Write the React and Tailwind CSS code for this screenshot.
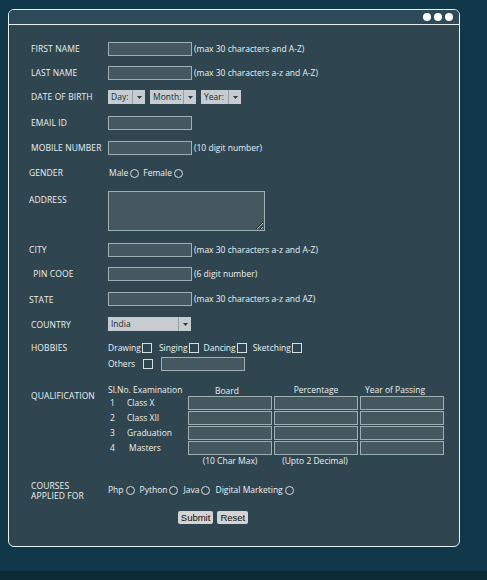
import React from "react";

const inputCls = "h-[14px] w-[84px] bg-[#43595f] border border-[#9eb0b4] outline-none";

function Label({ children, className = "" }) {
  return <div className={`w-[77px] shrink-0 text-[8.5px] uppercase tracking-[0.1px] ${className}`}>{children}</div>;
}

function TextRow({ label, hint, mt, labelCls = "" }) {
  return (
    <div className={`flex items-center h-[14px] ${mt}`}>
      <Label className={labelCls}>{label}</Label>
      <input className={inputCls} />
      {hint && <span className="ml-[2px] text-[8.5px]">{hint}</span>}
    </div>
  );
}

function Select({ text, w }) {
  return (
    <div className={`flex h-[14px] bg-[#c6cccf] text-[#1c2a30] text-[8.5px] ${w}`}>
      <span className="flex-1 pl-[3px] flex items-center">{text}</span>
      <span className="w-[13px] border-l border-[#93a0a5] flex items-center justify-center">
        <svg width="5" height="3" viewBox="0 0 5 3"><path d="M0 0h5L2.5 3z" fill="#2b3a40" /></svg>
      </span>
    </div>
  );
}

function Radio() {
  return <span className="inline-block w-[9px] h-[9px] rounded-full border border-[#d5dde0] ml-[2px]" />;
}

function Check() {
  return <span className="inline-block w-[10px] h-[10px] border border-[#d5dde0] ml-[1px]" />;
}

export default function App() {
  const quals = [
    ["1", "Class X", "ml-[12px]"],
    ["2", "Class XII", "ml-[12px]"],
    ["3", "Graduation", "ml-[12px]"],
    ["4", "Masters", "ml-[14px]"],
  ];
  return (
    <div className="w-[487px] h-[580px] bg-[#11384a] flex flex-col text-[#eaf0f2]" style={{ fontFamily: '"Open Sans", "Liberation Sans", sans-serif' }}>
      <div className="ml-[8px] mt-[9px] w-[452px] h-[538px] border-[1.5px] border-[#e9f0f2] rounded-[6px] bg-[#2f4650] overflow-hidden flex flex-col">
        <div className="h-[15px] shrink-0 bg-[#2c4a57] border-b-[1.5px] border-[#e9f0f2] flex items-center justify-end gap-[3px] pr-[6px]">
          <span className="w-[8px] h-[8px] rounded-full bg-white" />
          <span className="w-[8px] h-[8px] rounded-full bg-white" />
          <span className="w-[8px] h-[8px] rounded-full bg-white" />
        </div>
        <div className="pl-[22px] flex flex-col">
          <TextRow label="First Name" hint="(max 30 characters and A-Z)" mt="mt-[17px]" />
          <TextRow label="Last Name" hint="(max 30 characters a-z and A-Z)" mt="mt-[10px]" />
          <div className="flex items-center h-[14px] mt-[10px]">
            <Label>Date of Birth</Label>
            <div className="flex gap-[5px]">
              <Select text="Day:" w="w-[37px]" />
              <Select text="Month:" w="w-[46px]" />
              <Select text="Year:" w="w-[40px]" />
            </div>
          </div>
          <TextRow label="Email ID" mt="mt-[12px]" />
          <TextRow label="Mobile Number" hint="(10 digit number)" mt="mt-[11px]" />
          <div className="flex items-center h-[14px] mt-[11px]">
            <Label className="-ml-[2px] mr-[2px]">Gender</Label>
            <span className="text-[8.5px] ml-[1px]">Male</span><Radio />
            <span className="text-[8.5px] ml-[4px]">Female</span><Radio />
          </div>
          <div className="flex mt-[11px]">
            <Label className="-ml-[2px] mr-[2px] pt-[3px]">Address</Label>
            <textarea className="block w-[157px] h-[40px] bg-[#43595f] border border-[#9eb0b4] outline-none resize" />
          </div>
          <TextRow label="City" labelCls="-ml-[2px] mr-[2px]" hint="(max 30 characters a-z and A-Z)" mt="mt-[12px]" />
          <TextRow label={"\u00a0PIN COOE"} hint="(6 digit number)" mt="mt-[10px]" />
          <TextRow label="State" labelCls="-ml-[2px] mr-[2px] pt-[2px]" hint="(max 30 characters a-z and AZ)" mt="mt-[11px]" />
          <div className="flex items-center h-[14px] mt-[11px]">
            <Label className="pt-[2px]">Country</Label>
            <Select text="India" w="w-[83px]" />
          </div>
          <div className="flex items-center h-[14px] mt-[10px]">
            <Label>Hobbies</Label>
            <span className="text-[8.5px]">Drawing</span><Check />
            <span className="text-[8.5px] ml-[7px]">Singing</span><Check />
            <span className="text-[8.5px] ml-[5px]">Dancing</span><Check />
            <span className="text-[8.5px] ml-[6px]">Sketching</span><Check />
          </div>
          <div className="flex items-center h-[14px] mt-[2px]">
            <div className="w-[77px] shrink-0" />
            <span className="text-[8.5px]">Others</span>
            <span className="inline-block w-[10px] h-[10px] border border-[#d5dde0] ml-[8px]" />
            <input className="ml-[8px] h-[14px] w-[84px] bg-[#43595f] border border-[#9eb0b4] outline-none" />
          </div>
          <div className="flex mt-[11px]">
            <Label className="pt-[8px]">Qualification</Label>
            <div className="flex flex-col text-[8.5px]">
              <div className="grid grid-cols-[78px_84px_84px_84px] gap-x-[2px] h-[13px] items-center">
                <span className="whitespace-nowrap">Sl.No. Examination</span>
                <span className="text-center pt-[3px] -ml-[6px]">Board</span>
                <span className="text-center">Percentage</span>
                <span className="text-center -ml-[14px]">Year of Passing</span>
              </div>
              {quals.map(([n, name, ml]) => (
                <div key={n} className="grid grid-cols-[78px_84px_84px_84px] gap-x-[2px] mt-[1px] items-center">
                  <span className="flex pl-[2px]"><span className="w-[5px]">{n}</span><span className={ml}>{name}</span></span>
                  <input className="h-[14px] w-[84px] bg-[#43595f] border border-[#9eb0b4] outline-none" />
                  <input className="h-[14px] w-[84px] bg-[#43595f] border border-[#9eb0b4] outline-none" />
                  <input className="h-[14px] w-[84px] bg-[#43595f] border border-[#9eb0b4] outline-none" />
                </div>
              ))}
              <div className="grid grid-cols-[78px_84px_84px_84px] gap-x-[2px] h-[12px] items-center">
                <span />
                <span className="text-center">(10 Char Max)</span>
                <span className="text-center -ml-[2px]">(Upto 2 Decimal)</span>
                <span />
              </div>
            </div>
          </div>
          <div className="flex items-center mt-[14px] h-[19px]">
            <Label className="leading-[9.5px]">Courses<br />Applied For</Label>
            <span className="text-[8.5px]">Php</span><Radio />
            <span className="text-[8.5px] ml-[5px]">Python</span><Radio />
            <span className="text-[8.5px] ml-[5px]">Java</span><Radio />
            <span className="text-[8.5px] ml-[5px]">Digital Marketing</span><Radio />
          </div>
          <div className="flex justify-center gap-[4px] mt-[11px] pr-[64px]" style={{ fontFamily: '"Liberation Sans", Arial, sans-serif' }}>
            <button className="h-[13px] px-[3px] bg-[#d4d4d4] text-[#111] text-[9.5px] leading-[13px] rounded-[2px]">Submit</button>
            <button className="h-[13px] px-[3px] bg-[#d4d4d4] text-[#111] text-[9.5px] leading-[13px] rounded-[2px]">Reset</button>
          </div>
        </div>
      </div>
      <div className="mt-auto h-[9px] bg-[#0a2a35]" />
    </div>
  );
}
